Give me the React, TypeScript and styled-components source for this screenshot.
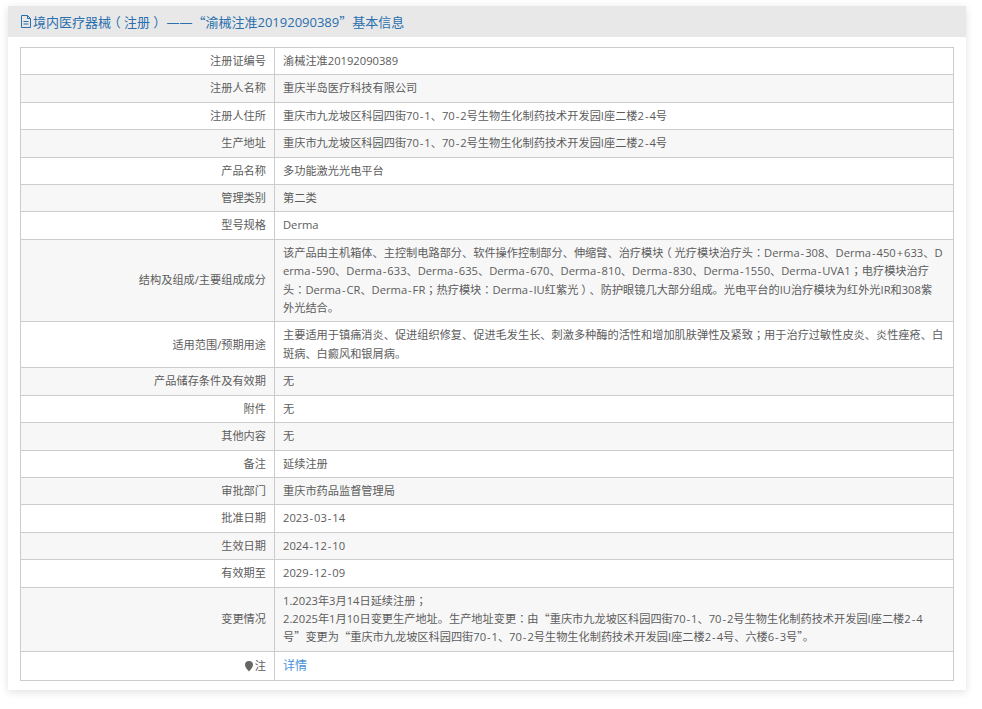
import styled, { createGlobalStyle } from 'styled-components';

const GlobalStyle = createGlobalStyle`
  html, body {
    margin: 0;
    background: #fff;
  }
  body {
    font-family: 'Open Sans', 'Noto Sans CJK SC', sans-serif;
    font-size: 11.2px;
    color: #5c5c5c;
  }
`;

const Page = styled.div`
  padding: 6px 16px 19px 8px;
`;

const Panel = styled.section`
  background: #fff;
  box-shadow: 0 2px 8px rgba(0, 0, 0, 0.12);
  padding-bottom: 9px;
`;

const Heading = styled.h1`
  margin: 0 0 10px;
  height: 31px;
  padding-left: 12px;
  display: flex;
  align-items: center;
  gap: 1px;
  background: #e8e8e8;
  color: #2a6fae;
  font-size: 13px;
  font-weight: 400;
`;

const Table = styled.table`
  width: 934px;
  margin: 0 0 0 12px;
  border-collapse: collapse;
  border: 1px solid #ccc;
  table-layout: fixed;
`;

const Row = styled.tr`
  &:nth-child(even) {
    background: #f7f7f7;
  }
`;

const Label = styled.th`
  box-sizing: border-box;
  width: 254px;
  padding: 5px 8px 5px 0;
  border: 1px solid #ccc;
  font-weight: 400;
  line-height: 16.4px;
  text-align: right;
`;

const Value = styled.td`
  padding: 5px 8px;
  border: 1px solid #ccc;
  line-height: 16.4px;
  vertical-align: middle;
`;

const Tall = styled.div`
  line-height: 18.4px;
  margin: -1px 0;
`;

const Line = styled.div`
  white-space: nowrap;
`;

const Link = styled.a`
  display: inline-block;
  color: #4a90d9;
  font-size: 12px;
  line-height: 18px;
  text-decoration: none;
`;

const Hyphen = styled.span`
  padding: 0 0.95px;
`;

// full-width punctuation sits centred in its box in the original font
const Colon = styled.span`
  font-family: 'Noto Sans CJK TC', sans-serif;
  line-height: 0;
`;

const Bracket = styled.span`
  padding: 0 0.25em;
  font-feature-settings: 'halt';
  line-height: 0;
`;

const Quote = styled.span`
  font-family: 'Noto Sans CJK SC', sans-serif;
  line-height: 0;
`;

const Pin = styled.svg`
  width: 10px;
  height: 12px;
  vertical-align: -2px;
  margin-right: 1px;
`;

const DocIcon = styled.svg`
  width: 12px;
  height: 13px;
  flex: none;
`;

function rich(text: string) {
  return text.split(/([-+：；（）“”])/).map((part, i) => {
    if (part === '-' || part === '+') return <Hyphen key={i}>{part}</Hyphen>;
    if (part === '：' || part === '；') return <Colon key={i}>{part}</Colon>;
    if (part === '（' || part === '）') return <Bracket key={i}>{part}</Bracket>;
    if (part === '“' || part === '”') return <Quote key={i}>{part}</Quote>;
    return part;
  });
}

const rows: [string, string[]][] = [
  ['注册证编号', ['渝械注准20192090389']],
  ['注册人名称', ['重庆半岛医疗科技有限公司']],
  ['注册人住所', ['重庆市九龙坡区科园四街70-1、70-2号生物生化制药技术开发园I座二楼2-4号']],
  ['生产地址', ['重庆市九龙坡区科园四街70-1、70-2号生物生化制药技术开发园I座二楼2-4号']],
  ['产品名称', ['多功能激光光电平台']],
  ['管理类别', ['第二类']],
  ['型号规格', ['Derma']],
  [
    '结构及组成/主要组成成分',
    [
      '该产品由主机箱体、主控制电路部分、软件操作控制部分、伸缩臂、治疗模块（光疗模块治疗头：Derma-308、Derma-450+633、D',
      'erma-590、Derma-633、Derma-635、Derma-670、Derma-810、Derma-830、Derma-1550、Derma-UVA1；电疗模块治疗',
      '头：Derma-CR、Derma-FR；热疗模块：Derma-IU红紫光）、防护眼镜几大部分组成。光电平台的IU治疗模块为红外光IR和308紫',
      '外光结合。',
    ],
  ],
  [
    '适用范围/预期用途',
    [
      '主要适用于镇痛消炎、促进组织修复、促进毛发生长、刺激多种酶的活性和增加肌肤弹性及紧致；用于治疗过敏性皮炎、炎性痤疮、白',
      '斑病、白癜风和银屑病。',
    ],
  ],
  ['产品储存条件及有效期', ['无']],
  ['附件', ['无']],
  ['其他内容', ['无']],
  ['备注', ['延续注册']],
  ['审批部门', ['重庆市药品监督管理局']],
  ['批准日期', ['2023-03-14']],
  ['生效日期', ['2024-12-10']],
  ['有效期至', ['2029-12-09']],
  [
    '变更情况',
    [
      '1.2023年3月14日延续注册；',
      '2.2025年1月10日变更生产地址。生产地址变更：由“重庆市九龙坡区科园四街70-1、70-2号生物生化制药技术开发园I座二楼2-4',
      '号”变更为“重庆市九龙坡区科园四街70-1、70-2号生物生化制药技术开发园I座二楼2-4号、六楼6-3号”。',
    ],
  ],
];

export default function App() {
  return (
    <Page>
      <GlobalStyle />
      <Panel>
        <Heading>
          <DocIcon viewBox="0 0 12 13" fill="none" stroke="currentColor" strokeWidth="1">
            <path d="M1.5 .5h6l3 3v9h-9z" />
            <path d="M7.5 .5v3h3M3.500 6.500h5M3.500 9h5" />
          </DocIcon>
          <span>{rich('境内医疗器械（注册） ——“渝械注准20192090389”基本信息')}</span>
        </Heading>
        <Table>
          <tbody>
            {rows.map(([label, lines]) => (
              <Row key={label}>
                <Label>{label}</Label>
                <Value>
                  {lines.length > 1 ? (
                    <Tall>
                      {lines.map((line) => (
                        <Line key={line}>{rich(line)}</Line>
                      ))}
                    </Tall>
                  ) : (
                    rich(lines[0])
                  )}
                </Value>
              </Row>
            ))}
            <Row>
              <Label>
                <Pin viewBox="0 0 10 12">
                  <path d="M5 1a4 4 0 0 1 4 4c0 2.500-2.500 4.500-4 6.500C3.500 9.500 1 7.500 1 5a4 4 0 0 1 4-4z" fill="#666" />
                </Pin>
                注
              </Label>
              <Value>
                <Link href="#">详情</Link>
              </Value>
            </Row>
          </tbody>
        </Table>
      </Panel>
    </Page>
  );
}
